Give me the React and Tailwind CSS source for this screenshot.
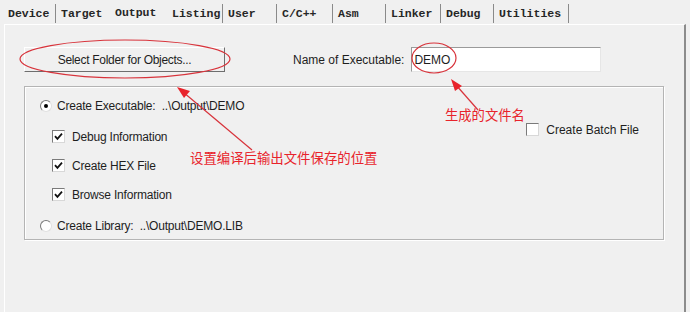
import React from 'react';

const tabs = [
  { label: 'Device', w: 'w-[53px]' },
  { label: 'Target', w: 'w-[54px]' },
  { label: 'Output', w: 'w-[57px]', active: true },
  { label: 'Listing', w: 'w-[56px]' },
  { label: 'User', w: 'w-[54px]' },
  { label: 'C/C++', w: 'w-[56px]' },
  { label: 'Asm', w: 'w-[53px]' },
  { label: 'Linker', w: 'w-[55px]' },
  { label: 'Debug', w: 'w-[53px]' },
  { label: 'Utilities', w: 'w-[75px]' },
];

const Check = ({ checked }) => (
  <span className="w-[13px] h-[13px] bg-white border border-[#7a7a7a] border-b-[#d8d8d8] border-r-[#d8d8d8] flex items-center justify-center">
    {checked && (
      <svg width="9" height="9" viewBox="0 0 9 9">
        <path d="M1 4.2 L3.4 6.8 L8 1.6" fill="none" stroke="#111" strokeWidth="1.8" />
      </svg>
    )}
  </span>
);

const Radio = ({ on }) => (
  <span className="w-[12px] h-[12px] rounded-full bg-white border border-[#7a7a7a] border-b-[#e0e0e0] border-r-[#e0e0e0] flex items-center justify-center">
    {on && <span className="w-[4px] h-[4px] rounded-full bg-black" />}
  </span>
);

export default function App() {
  return (
    <div
      className="relative w-[690px] h-[312px] bg-[#f0f0f0] overflow-hidden text-[12px] text-[#1e1e1e]"
      style={{ fontFamily: '"Liberation Sans", Arial, sans-serif' }}
    >
      {/* Tabs */}
      <div className="h-[24px] flex items-end pl-[3px] pb-[1px]">
        {tabs.map((t) => (
          <div
            key={t.label}
            className={`${t.w} h-[19px] flex items-center pl-[5px] text-[11.5px] font-semibold text-[#262626] ${
              t.active ? 'mb-[1px]' : t.label === 'Target' ? '' : 'border-r border-[#8a8a8a]'
            }`}
            style={{ fontFamily: '"Liberation Mono", "DejaVu Sans Mono", monospace' }}
          >
            {t.label}
          </div>
        ))}
      </div>

      {/* Panel */}
      <div className="ml-[4px] w-[682px] h-[288px] border-t border-l border-white border-r-2 border-r-[#8c8c8c] pt-[22px] pl-[19px]">
        <div className="flex items-center h-[25px]">
          <div className="w-[201px] h-[25px] flex items-center justify-center border border-white border-b-[#6e6e6e] border-r-[#6e6e6e] tracking-[-0.3px]">
            Select Folder for Objects...
          </div>
          <div className="ml-[68px]">Name of Executable:</div>
          <div className="ml-[7px] w-[190px] h-[25px] bg-white border border-[#9a9a9a] border-b-[#e6e6e6] border-r-[#e6e6e6] flex items-center pl-[2px]">
            DEMO
          </div>
        </div>

        {/* Group box */}
        <div className="mt-[14px] w-[640px] h-[154px] border border-[#b4b4b4] shadow-[inset_1px_1px_0_#fff,1px_1px_0_#fff] flex">
          <div className="pl-[15px] pt-[12px] flex flex-col">
            <div className="h-[14px] flex items-center gap-[5px]">
              <Radio on />
              <span className="tracking-[-0.2px]">Create Executable:&nbsp; ..\Output\DEMO</span>
            </div>
            <div className="pl-[12px] mt-[17px] flex flex-col gap-[16px]">
              <div className="h-[13px] flex items-center gap-[7px]">
                <Check checked />
                <span className="tracking-[-0.2px]">Debug Information</span>
              </div>
              <div className="h-[13px] flex items-center gap-[7px]">
                <Check checked />
                <span className="tracking-[-0.2px]">Create HEX File</span>
              </div>
              <div className="h-[13px] flex items-center gap-[7px]">
                <Check checked />
                <span className="tracking-[-0.2px]">Browse Information</span>
              </div>
            </div>
            <div className="mt-[18px] h-[14px] flex items-center gap-[5px]">
              <Radio />
              <span className="tracking-[-0.2px]">Create Library:&nbsp; ..\Output\DEMO.LIB</span>
            </div>
          </div>
          <div className="ml-auto mr-[24px] pt-[36px]">
            <div className="h-[13px] flex items-center gap-[7px]">
              <Check />
              <span>Create Batch File</span>
            </div>
          </div>
        </div>
      </div>

      {/* Annotations */}
      <div
        className="absolute left-[445px] top-[108px] text-[13.3px] leading-none text-[#e8232b]"
        style={{ fontFamily: '"Noto Sans CJK SC", sans-serif' }}
      >
        生成的文件名
      </div>
      <div
        className="absolute left-[190px] top-[151px] text-[13.4px] leading-none text-[#e8232b]"
        style={{ fontFamily: '"Noto Sans CJK SC", sans-serif' }}
      >
        设置编译后输出文件保存的位置
      </div>
      <svg className="absolute inset-0 pointer-events-none" width="690" height="312">
        <ellipse cx="125" cy="59" rx="105" ry="19" fill="none" stroke="#d8333b" strokeWidth="1.2" />
        <ellipse cx="434" cy="58" rx="22" ry="15" fill="none" stroke="#d8333b" strokeWidth="1.2" />
        <line x1="252" y1="150" x2="183" y2="92" stroke="#d8333b" strokeWidth="1.2" />
        <polygon points="177,87 190,91 184,98" fill="#e8232b" />
        <line x1="478" y1="110" x2="456" y2="85" stroke="#d8333b" strokeWidth="1.2" />
        <polygon points="451,79 462,86 455,91" fill="#e8232b" />
      </svg>
    </div>
  );
}
